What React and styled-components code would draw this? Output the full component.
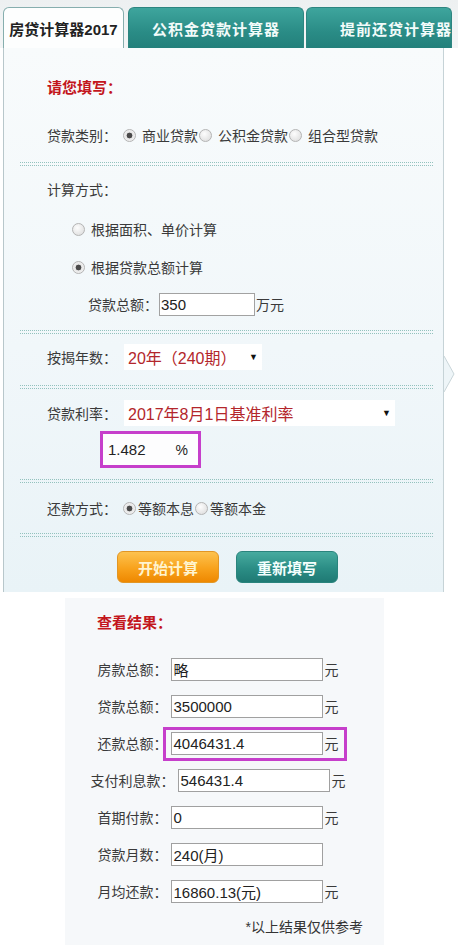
import styled, { createGlobalStyle } from "styled-components";

const GlobalStyle = createGlobalStyle`
  body {
    margin: 0;
    background: #fff;
    font-family: "Liberation Sans", "Noto Sans CJK SC", sans-serif;
    color: #3a3a3a;
  }
`;

function Radio({ checked }) {
  return <RadioDot $checked={checked} />;
}

function Select({ value, width }) {
  return (
    <SelectBox $w={width}>
      <span>{value}</span>
      <span className="arrow">▼</span>
    </SelectBox>
  );
}

function ResultRow({ label, value, unit = true, highlight }) {
  const body = (
    <>
      <Field>{value}</Field>
      <Unit $hidden={!unit}>元</Unit>
    </>
  );
  return (
    <ResultLine>
      <ResultLabel>{label}</ResultLabel>
      {highlight ? <Highlight>{body}</Highlight> : body}
    </ResultLine>
  );
}

export default function App() {
  return (
    <Page>
      <GlobalStyle />
      <TabBar>
        <Tab $active $w={121} $mr={4}>房贷计算器2017</Tab>
        <Tab $w={176} $mr={2}>公积金贷款计算器</Tab>
        <Tab $w={146} $pl={33}>提前还贷计算器</Tab>
      </TabBar>

      <Panel>
        <Section $pt={26} $pb={13}>
          <Title>请您填写：</Title>
          <Row $mt={19}>
            <Label>贷款类别：</Label>
            <Radio checked />
            <Choice>商业贷款</Choice>
            <Radio />
            <Choice>公积金贷款</Choice>
            <Radio />
            <Choice>组合型贷款</Choice>
          </Row>
        </Section>
        <Rule />
        <Section $pt={9} $pb={12}>
          <Row>
            <Label>计算方式：</Label>
          </Row>
          <Row $mt={12} $indent={25}>
            <Radio />
            <Choice>根据面积、单价计算</Choice>
          </Row>
          <Row $mt={10} $indent={25}>
            <Radio checked />
            <Choice>根据贷款总额计算</Choice>
          </Row>
          <Row $mt={9} $indent={41}>
            <Label>贷款总额：</Label>
            <AmountInput>350</AmountInput>
            <span>万元</span>
          </Row>
        </Section>
        <Rule />
        <Section $pt={9} $pb={14}>
          <Row>
            <Label>按揭年数：</Label>
            <Select value="20年（240期）" width={138} />
          </Row>
        </Section>
        <Rule />
        <Section $pt={10} $pb={11}>
          <Row>
            <Label>贷款利率：</Label>
            <Select value="2017年8月1日基准利率" width={271} />
          </Row>
          <RateBox>
            <span>1.482</span>
            <span className="pct">%</span>
          </RateBox>
        </Section>
        <Rule />
        <Section $pt={11} $pb={11}>
          <Row>
            <Label>还款方式：</Label>
            <Radio checked />
            <Choice $tight>等额本息</Choice>
            <Radio />
            <Choice $tight>等额本金</Choice>
          </Row>
        </Section>
        <Rule />
        <Buttons>
          <Button $kind="orange">开始计算</Button>
          <Button $kind="teal">重新填写</Button>
        </Buttons>
        <Notch width="12" height="36" viewBox="0 0 12 36">
          <polyline points="1,0 11,18 1,36" fill="#eef5f8" stroke="#c9d5d9" strokeWidth="1" />
        </Notch>
      </Panel>

      <ResultPanel>
        <ResultTitle>查看结果：</ResultTitle>
        <ResultList>
          <ResultRow label="房款总额：" value="略" />
          <ResultRow label="贷款总额：" value="3500000" />
          <ResultRow label="还款总额：" value="4046431.4" highlight />
          <ResultRow label="支付利息款：" value="546431.4" />
          <ResultRow label="首期付款：" value="0" />
          <ResultRow label="贷款月数：" value="240(月)" unit={false} />
          <ResultRow label="月均还款：" value="16860.13(元)" />
        </ResultList>
        <Note>*以上结果仅供参考</Note>
      </ResultPanel>
    </Page>
  );
}

const Page = styled.div`
  width: 458px;
  padding-bottom: 4px;
`;

const TabBar = styled.div`
  display: flex;
  align-items: flex-end;
  height: 48px;
  box-sizing: border-box;
  padding: 7px 0 0 3px;
  background: linear-gradient(#edf0f1, #f3f5f6);
`;

const Tab = styled.div`
  width: ${(p) => p.$w}px;
  margin-right: ${(p) => p.$mr || 0}px;
  height: 41px;
  box-sizing: border-box;
  display: flex;
  align-items: center;
  justify-content: ${(p) => (p.$pl ? "flex-start" : "center")};
  padding-left: ${(p) => p.$pl || 0}px;
  border-radius: 6px 6px 0 0;
  font-size: 15px;
  font-weight: 700;
  white-space: nowrap;
  ${(p) =>
    p.$active
      ? `
    background: #fdfefe;
    color: #222;
    border: 1px solid #86aeae;
    border-bottom: none;
  `
      : `
    background: linear-gradient(#3ea59d, #2a8c86 60%, #23807b);
    color: #f2fbfa;
    letter-spacing: 1px;
    border: 1px solid #2d8580;
    border-bottom: none;
  `}
`;

const Panel = styled.div`
  position: relative;
  margin-left: 3px;
  width: 441px;
  height: 544px;
  box-sizing: border-box;
  border-left: 1px solid #b8c7cb;
  border-right: 1px solid #c6d3d7;
  background: linear-gradient(180deg, #f8fbfc 0%, #f1f7fa 55%, #e9f3f7 100%);
`;

const Section = styled.div`
  padding: ${(p) => p.$pt}px 0 ${(p) => p.$pb}px 43px;
`;

const Title = styled.div`
  line-height: 28px;
  font-size: 15px;
  font-weight: 700;
  color: #c3161c;
`;

const Row = styled.div`
  display: flex;
  align-items: center;
  height: 28px;
  margin-top: ${(p) => p.$mt || 0}px;
  padding-left: ${(p) => p.$indent || 0}px;
  font-size: 14px;
  white-space: nowrap;
`;

const Label = styled.span`
  margin-right: 6px;
`;

const Choice = styled.span`
  margin-left: ${(p) => (p.$tight ? 2 : 6)}px;
  margin-right: 1px;
`;

const RadioDot = styled.span`
  width: 11px;
  height: 11px;
  flex: none;
  border-radius: 50%;
  border: 1px solid #b4b4b4;
  background: ${(p) =>
    p.$checked
      ? "radial-gradient(circle, #4a4a4a 0 2.6px, #e6e6e6 3.2px, #fafafa 100%)"
      : "radial-gradient(circle at 40% 35%, #fdfdfd, #d9d9d9)"};
`;

const AmountInput = styled.span`
  width: 96px;
  height: 23px;
  box-sizing: border-box;
  display: flex;
  align-items: center;
  padding-left: 1px;
  margin-left: -5px;
  margin-right: 1px;
  border: 1px solid #a2a2a2;
  background: #fff;
  font-size: 15px;
  color: #222;
`;

const SelectBox = styled.span`
  width: ${(p) => p.$w}px;
  height: 26px;
  box-sizing: border-box;
  display: flex;
  align-items: center;
  justify-content: space-between;
  padding: 0 4px;
  margin-left: 1px;
  background: #fff;
  color: #b3262b;
  font-size: 16px;

  .arrow {
    color: #111;
    font-size: 9px;
  }
`;

const RateBox = styled.div`
  width: 101px;
  height: 37px;
  margin: 4px 0 0 53px;
  box-sizing: border-box;
  display: flex;
  align-items: center;
  padding-left: 5px;
  border: 3px solid #c63fcb;
  background: #fdfdfe;
  font-size: 15px;
  color: #222;

  .pct {
    margin-left: 30px;
    font-size: 14px;
  }
`;

const Rule = styled.div`
  height: 2px;
  margin: 0 10px 0 16px;
  border-top: 1px dotted #93c2be;
  border-bottom: 1px dotted #93c2be;
`;

const Buttons = styled.div`
  display: flex;
  gap: 17px;
  padding: 14px 0 9px 113px;
`;

const Button = styled.div`
  width: 102px;
  height: 32px;
  box-sizing: border-box;
  display: flex;
  align-items: center;
  justify-content: center;
  border-radius: 6px;
  font-size: 15px;
  font-weight: 700;
  ${(p) =>
    p.$kind === "orange"
      ? `
    background: linear-gradient(#fdc24f, #f8a21c 55%, #ee8800);
    border: 1px solid #e29624;
    color: #fff4cf;
  `
      : `
    background: linear-gradient(#47ab9f, #2b8d85 55%, #1f7a74);
    border: 1px solid #2a847d;
    color: #f4fffd;
  `}
`;

const Notch = styled.svg`
  position: absolute;
  right: -12px;
  top: 308px;
`;

const ResultPanel = styled.div`
  margin: 6px 0 0 65px;
  width: 319px;
  height: 347px;
  box-sizing: border-box;
  padding-top: 11px;
  background: #f6f8fa;
`;

const ResultTitle = styled.div`
  padding-left: 32px;
  line-height: 28px;
  font-size: 15px;
  font-weight: 700;
  color: #c3161c;
`;

const ResultList = styled.div`
  display: flex;
  flex-direction: column;
  gap: 7px;
  margin-top: 17px;
  padding-right: 13px;
`;

const ResultLine = styled.div`
  display: flex;
  align-items: center;
  justify-content: center;
  height: 30px;
  font-size: 14px;
  white-space: nowrap;
`;

const ResultLabel = styled.span`
  margin-right: 3px;
`;

const Field = styled.span`
  width: 152px;
  height: 23px;
  box-sizing: border-box;
  display: flex;
  align-items: center;
  padding-left: 2px;
  border: 1px solid #a0a0a0;
  background: #fff;
  font-size: 15px;
  color: #222;
`;

const Unit = styled.span`
  margin-left: 2px;
  visibility: ${(p) => (p.$hidden ? "hidden" : "visible")};
`;

const Highlight = styled.span`
  position: relative;
  display: flex;
  align-items: center;

  &::after {
    content: "";
    position: absolute;
    top: -5px;
    bottom: -6px;
    left: -8px;
    right: -8px;
    border: 3px solid #c63fcb;
  }
`;

const Note = styled.div`
  margin-top: 7px;
  padding-right: 21px;
  text-align: right;
  line-height: 28px;
  font-size: 14px;
  color: #333;
`;
